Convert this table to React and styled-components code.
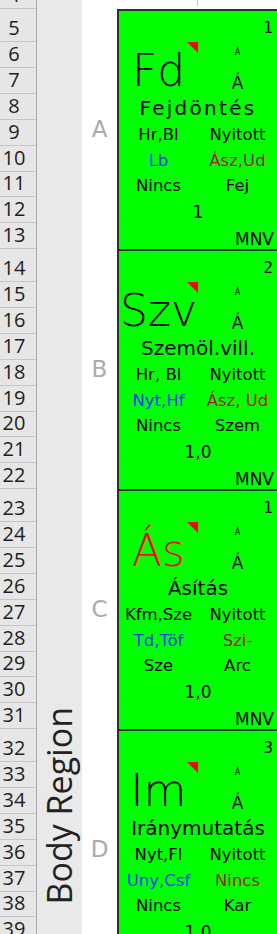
import React from 'react'
import styled, { createGlobalStyle } from 'styled-components'

const GlobalStyle = createGlobalStyle`
  html, body {
    margin: 0;
    padding: 0;
    background: #ffffff;
  }
  body {
    overflow: hidden;
  }
`

// sheet row heights for one region block (rows 5..13, 14..22 ...)
const BLOCK_ROWS = [33, 26, 26, 26, 26, 26, 25, 26, 26]

const regions = [
  { letter: 'A', num: '1', code: 'Fd', name: 'Fejdöntés', track: 2.3, a: 'Hr,Bl', b: 'Nyitott', c: 'Lb', d: 'Ász,Ud', e: 'Nincs', f: 'Fej', score: '1' },
  { letter: 'B', num: '2', code: 'Szv', name: 'Szemöl.vill.', a: 'Hr, Bl', b: 'Nyitott', c: 'Nyt,Hf', d: 'Ász, Ud', e: 'Nincs', f: 'Szem', score: '1,0' },
  { letter: 'C', num: '1', code: 'Ás', red: true, name: 'Ásítás', a: 'Kfm,Sze', b: 'Nyitott', c: 'Td,Töf', d: 'Szi-', e: 'Sze', f: 'Arc', score: '1,0' },
  { letter: 'D', num: '3', code: 'Im', name: 'Iránymutatás', a: 'Nyt,Fl', b: 'Nyitott', c: 'Uny,Csf', d: 'Nincs', e: 'Nincs', f: 'Kar', score: '1,0' },
]

export default function App() {
  const heads = [{ n: 4, h: 9, clip: true }]
  let n = 5
  regions.forEach(() => {
    BLOCK_ROWS.forEach((h) => {
      heads.push({ n, h })
      n++
    })
  })

  return (
    <>
      <GlobalStyle />
      <Sheet>
        <RowHeads>
          {heads.map((r) => (
            <RowHead key={r.n} $h={r.h} $clip={r.clip}>{r.n}</RowHead>
          ))}
        </RowHeads>
        <RegionColumn>
          <RegionTitle>Body Region</RegionTitle>
        </RegionColumn>
        <Main>
          <TopGap>
            <Tick />
          </TopGap>
          {regions.map((r) => (
            <RegionRow key={r.letter}>
              <Letter>{r.letter}</Letter>
              <Card>
                <CornerNum>{r.num}</CornerNum>
                <Code $red={r.red}>
                  {r.code}
                  <Flag />
                </Code>
                <TinyMark>Á</TinyMark>
                <Mark>Á</Mark>
                <Title $track={r.track}>{r.name}</Title>
                <Field>{r.a}</Field>
                <Field>{r.b}</Field>
                <Field $color="#1438ff">{r.c}</Field>
                <Field $color="#a11b1b">{r.d}</Field>
                <Field>{r.e}</Field>
                <Field>{r.f}</Field>
                <Score>{r.score}</Score>
                <Footer>MNV</Footer>
              </Card>
            </RegionRow>
          ))}
        </Main>
      </Sheet>
    </>
  )
}

const Sheet = styled.div`
  display: flex;
  height: 934px;
  overflow: hidden;
  font-family: "DejaVu Sans", "Liberation Sans", sans-serif;
`
const RowHeads = styled.div`
  flex: 0 0 37px;
  box-sizing: border-box;
  display: flex;
  flex-direction: column;
  background: #e6e6e6;
  border-right: 1px solid #aaaaaa;
`
const RowHead = styled.div`
  flex: 0 0 ${(p) => p.$h}px;
  box-sizing: border-box;
  display: flex;
  align-items: flex-end;
  justify-content: center;
  padding: 0 8px 3px 0;
  border-bottom: 1px solid #c6c6c6;
  overflow: ${(p) => (p.$clip ? 'hidden' : 'visible')};
  font-family: "Open Sans", sans-serif;
  font-size: 20px;
  line-height: 20px;
  color: #1e1e1e;
`
const RegionColumn = styled.div`
  flex: 0 0 45px;
  box-sizing: border-box;
  display: flex;
  flex-direction: column;
  justify-content: flex-end;
  align-items: center;
  padding-bottom: 29px;
  background: #e9e9e9;
`
const RegionTitle = styled.div`
  writing-mode: vertical-rl;
  transform: rotate(180deg);
  font-family: "Open Sans", sans-serif;
  font-size: 34px;
  line-height: 45px;
  color: #222222;
  white-space: nowrap;
`
const Main = styled.div`
  flex: 1;
  min-width: 0;
  display: flex;
  flex-direction: column;
  overflow: hidden;
`
const TopGap = styled.div`
  flex: 0 0 9px;
  padding-left: 115px;
`
const Tick = styled.div`
  width: 1px;
  height: 6px;
  background: #b7c2d2;
`
const RegionRow = styled.div`
  flex: 0 0 240px;
  display: flex;
`
const Letter = styled.div`
  flex: 0 0 35px;
  display: flex;
  align-items: center;
  justify-content: center;
  font-size: 23px;
  color: #ababab;
`
const Card = styled.div`
  flex: 0 0 162px;
  box-sizing: border-box;
  display: grid;
  grid-template-columns: 1fr 1fr;
  grid-template-rows: 31px 26px 26px 26px 26px 26px 25px 26px 26px;
  background: #00ff00;
  border: 2px solid #2e2e2e;
  border-bottom: 0;
  color: #000000;
`
const Slot = styled.div`
  display: flex;
  align-items: flex-end;
  justify-content: center;
  white-space: nowrap;
  line-height: normal;
`
const CornerNum = styled(Slot)`
  grid-column: 1 / -1;
  justify-content: flex-end;
  padding: 0 4px 5px 0;
  font-size: 15px;
`
const Code = styled(Slot)`
  position: relative;
  grid-column: 1;
  grid-row: 2 / span 2;
  padding-bottom: 2px;
  font-size: 44px;
  font-weight: 200;
  line-height: 43px;
  color: ${(p) => (p.$red ? '#ff0000' : '#000000')};
`
const Flag = styled.span`
  position: absolute;
  top: 0;
  right: 0;
  width: 0;
  height: 0;
  border-top: 11px solid #ff0000;
  border-left: 11px solid transparent;
`
const TinyMark = styled(Slot)`
  grid-column: 2;
  padding-bottom: 11px;
  font-size: 8px;
`
const Mark = styled(Slot)`
  grid-column: 2;
  padding-bottom: 1px;
  font-size: 17px;
`
const Title = styled(Slot)`
  grid-column: 1 / -1;
  font-size: 20px;
  letter-spacing: ${(p) => p.$track || 0}px;
`
const Field = styled(Slot)`
  padding-bottom: 2px;
  font-size: 16.5px;
  color: ${(p) => p.$color || '#000000'};
`
const Score = styled(Slot)`
  grid-column: 1 / -1;
  padding-bottom: 1px;
  font-size: 17px;
`
const Footer = styled(Slot)`
  grid-column: 1 / -1;
  justify-content: flex-end;
  padding-right: 3px;
  font-size: 17px;
`
